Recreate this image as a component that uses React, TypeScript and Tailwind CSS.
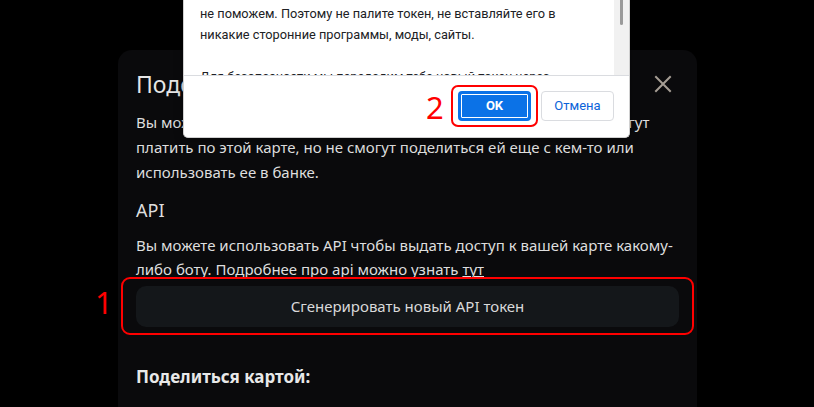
import React from "react";

function CloseIcon() {
  return (
    <svg width="18" height="18" viewBox="0 0 18 18" fill="none">
      <path d="M2 2L16 16M16 2L2 16" stroke="#a59d94" strokeWidth="2" strokeLinecap="square" />
    </svg>
  );
}

export default function App() {
  return (
    <div
      className="relative h-[407px] w-[814px] overflow-hidden bg-black"
      style={{ fontFamily: "'Noto Sans', 'Open Sans', sans-serif" }}
    >
      {/* Share card modal */}
      <div className="ml-[118px] mt-[50px] w-[579px] rounded-[14px] bg-[#0a0a0c] px-[18px] pt-[16px] pb-[40px] text-[#dedede]">
        <div className="flex h-[36px] items-center justify-between">
          <h2 className="text-[23px] leading-[36px] text-[#e6e6e6]">Поделиться картой</h2>
          <button className="mr-[4px] flex h-[24px] w-[24px] items-center justify-center">
            <CloseIcon />
          </button>
        </div>
        <p className="mt-[8px] text-[15px] leading-[25px]">
          Вы можете поделиться картой с другим человеком, и они тоже смогут
          платить по этой карте, но не смогут поделиться ей еще с кем-то или
          использовать ее в банке.
        </p>
        <h3 className="mt-[11px] text-[18px] leading-[28px]">API</h3>
        <p className="mt-[9px] text-[15px] leading-[24px]">
          Вы можете использовать API чтобы выдать доступ к вашей карте какому-либо боту. Подробнее про api можно
          узнать{" "}
          <a href="#" className="underline decoration-[#dedede] decoration-1 underline-offset-[1px]">
            тут
          </a>
        </p>
        <button className="mt-[5px] h-[41px] w-full rounded-[10px] bg-[#14171a] text-[15px] text-[#d9d9d9]">
          Сгенерировать новый API токен
        </button>
        <h3 className="mt-[36px] text-[17px] font-bold leading-[28px] text-[#e8e8e8]">Поделиться картой:</h3>
      </div>

      {/* annotation 1 */}
      <div className="absolute left-[121px] top-[277px] h-[58px] w-[573px] rounded-[9px] border-2 border-[#ff0000]" />
      <span className="absolute left-[95px] top-[282px] text-[31px] leading-[40px] text-[#ff0000]">1</span>

      {/* browser confirm dialog */}
      <div
        className="absolute left-[183px] top-0 w-[447px] rounded-b-[5px] border-x border-b border-[#d0d0d0] bg-white shadow-[0_2px_8px_rgba(0,0,0,0.35)]"
        style={{ fontFamily: "Roboto, 'Noto Sans', sans-serif" }}
      >
        <div className="flex h-[75px]">
          <div className="relative flex-1 overflow-hidden">
            <div className="absolute left-[16px] top-[-18px] whitespace-nowrap text-[12.75px] leading-[21px] text-[#202124]">
              <p>Мы не несем ответственности, если токен украдут, и ничем</p>
              <p>не поможем. Поэтому не палите токен, не вставляйте его в</p>
              <p>никакие сторонние программы, моды, сайты.</p>
              <p className="mt-[21px]">Для безопасности мы передадим тебе новый токен через</p>
            </div>
          </div>
          <div className="w-[15px] bg-[#f1f1f1]">
            <div className="mx-auto h-[25px] w-[3px] rounded-b-[2px] bg-[#9a9a9a]" />
          </div>
        </div>
        <div className="flex h-[62px] justify-end gap-[10px] border-t border-[#dadce0] pr-[15px] pt-[15px]">
          <button className="h-[30px] w-[73px] rounded-[4px] bg-[#0b72e7] text-[13px] font-bold text-white outline outline-1 outline-offset-[-4px] outline-white">
            OK
          </button>
          <button className="h-[30px] w-[73px] rounded-[4px] border border-[#dadce0] bg-white text-[13px] text-[#0b63d9]">
            Отмена
          </button>
        </div>
      </div>

      {/* annotation 2 */}
      <div className="absolute left-[451px] top-[85px] h-[42px] w-[87px] rounded-[7px] border-2 border-[#ff0000]" />
      <span className="absolute left-[426px] top-[87px] text-[31px] leading-[40px] text-[#ff0000]">2</span>
    </div>
  );
}
